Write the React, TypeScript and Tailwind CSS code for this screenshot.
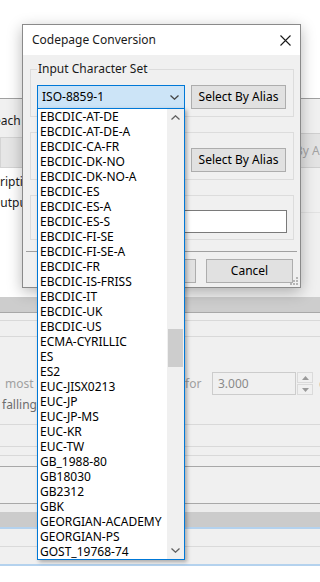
import React from "react";

const charsets = [
  "EBCDIC-AT-DE",
  "EBCDIC-AT-DE-A",
  "EBCDIC-CA-FR",
  "EBCDIC-DK-NO",
  "EBCDIC-DK-NO-A",
  "EBCDIC-ES",
  "EBCDIC-ES-A",
  "EBCDIC-ES-S",
  "EBCDIC-FI-SE",
  "EBCDIC-FI-SE-A",
  "EBCDIC-FR",
  "EBCDIC-IS-FRISS",
  "EBCDIC-IT",
  "EBCDIC-UK",
  "EBCDIC-US",
  "ECMA-CYRILLIC",
  "ES",
  "ES2",
  "EUC-JISX0213",
  "EUC-JP",
  "EUC-JP-MS",
  "EUC-KR",
  "EUC-TW",
  "GB_1988-80",
  "GB18030",
  "GB2312",
  "GBK",
  "GEORGIAN-ACADEMY",
  "GEORGIAN-PS",
  "GOST_19768-74",
];

function Chevron({ up = false, className = "" }: { up?: boolean; className?: string }) {
  return (
    <svg width="9" height="5" viewBox="0 0 9 5" className={className}>
      <path
        d={up ? "M0.5 4.5 L4.5 0.8 L8.5 4.5" : "M0.5 0.5 L4.5 4.2 L8.5 0.5"}
        fill="none"
        stroke="currentColor"
        strokeWidth="1.3"
      />
    </svg>
  );
}

function Background() {
  return (
    <div className="flex h-full flex-col">
      <div className="h-[98px] shrink-0 bg-white" />
      <div className="flex h-[34px] shrink-0 items-end border-t border-[#a0a0a0] bg-[#f0f0f0] pb-[3px]">
        <span className="-ml-[6px] whitespace-nowrap leading-[16px] text-[#1a1a1a]">each value</span>
      </div>
      <div className="flex h-[36px] shrink-0 items-stretch gap-[6px] bg-[#f0f0f0] pt-[1px]">
        <div className="mt-[4px] w-[245px] shrink-0 border border-[#d4d4d4] bg-[#e6e6e6]" />
        <div className="flex w-[95px] shrink-0 items-center justify-center whitespace-nowrap border border-[#cfcfcf] bg-[#e3e3e3] text-[#a3a3a3]">
          Select By Alias
        </div>
      </div>
      <div className="flex h-[129px] shrink-0">
        <div className="flex w-[170px] flex-col items-start bg-white pt-[6px]">
          <span className="-ml-[27px] whitespace-nowrap leading-[16px] text-[#1a1a1a]">Description</span>
          <span className="-ml-[9px] mt-[5px] whitespace-nowrap leading-[16px] text-[#1a1a1a]">Output</span>
        </div>
        <div className="flex-1 bg-[#f0f0f0]">
          <div className="mt-[44px] border-t border-[#e2e2e2]" />
        </div>
      </div>
      <div className="h-[15px] shrink-0 bg-[#cdcdcd]" />
      <div className="h-[8px] shrink-0 border-t border-[#a8a8a8] bg-[#f0f0f0]" />
      <div className="h-[16px] shrink-0 border-t border-[#d9d9d9] bg-[#f0f0f0]" />
      <div className="flex h-[88px] shrink-0 flex-col border-t border-[#d9d9d9] bg-[#f0f0f0]">
        <div className="mt-[35px] flex h-[23px] items-center">
          <span className="w-[180px] shrink-0 pl-[5px] text-[#a0a0a0]">most recent</span>
          <span className="w-[32px] shrink-0 pl-[5px] text-[#a0a0a0]">for</span>
          <div className="flex h-[23px] w-[84px] shrink-0 items-center border border-[#cccccc] bg-[#f0f0f0] pl-[5px] text-[#8a8a8a]">
            3.000
          </div>
          <div className="ml-[1px] flex h-[23px] w-[16px] shrink-0 flex-col gap-[1px]">
            <div className="flex flex-1 items-center justify-center border border-[#dadada] text-[#9a9a9a]">
              <svg width="7" height="4" viewBox="0 0 7 4"><path d="M0 4 L3.5 0 L7 4Z" fill="currentColor" /></svg>
            </div>
            <div className="flex flex-1 items-center justify-center border border-[#dadada] text-[#9a9a9a]">
              <svg width="7" height="4" viewBox="0 0 7 4"><path d="M0 0 L3.5 4 L7 0Z" fill="currentColor" /></svg>
            </div>
          </div>
          <span className="ml-[6px] text-[#a0a0a0]">c</span>
        </div>
        <span className="mt-[2px] pl-[2px] leading-[16px] text-[#6d6d6d]">falling</span>
      </div>
      <div className="h-[22px] shrink-0 border-t border-[#d9d9d9] bg-[#f0f0f0]" />
      <div className="h-[9px] shrink-0 border-t border-[#d9d9d9] bg-[#f0f0f0]" />
      <div className="h-[11px] shrink-0 border-t border-[#d9d9d9] bg-[#f0f0f0]" />
      <div className="h-[37px] shrink-0 border-t border-[#a8a8a8] bg-[#f0f0f0]" />
      <div className="h-[9px] shrink-0 border-t border-[#a8a8a8] bg-[#ececec]" />
      <div className="h-[15px] shrink-0 bg-[#cbcbcb]" />
      <div className="h-[19px] shrink-0 border-t-2 border-[#b4d2ee] bg-[#f0f0f0]" />
      <div className="h-[18px] shrink-0 border-t border-[#dadada] bg-[#f0f0f0]" />
      <div className="flex-1 border-t-2 border-[#b4d2ee] bg-white" />
    </div>
  );
}

function GroupBox({ label, children, className = "" }: { label: string; children: React.ReactNode; className?: string }) {
  return (
    <fieldset className={`ml-[7px] mr-[6px] border border-[#dcdcdc] px-[6px] ${className}`}>
      <legend className="px-[1px] leading-[16px] text-[#1a1a1a]">{label}</legend>
      {children}
    </fieldset>
  );
}

function Dialog() {
  return (
    <div className="absolute left-[22px] top-[24px] w-[279px] border border-[#8a8a8a] bg-[#f0f0f0] shadow-[0_4px_14px_rgba(0,0,0,0.28)]">
      <div className="flex h-[30px] items-center justify-between bg-white pl-[9px] pr-[9px]">
        <span className="text-[#1a1a1a]">Codepage Conversion</span>
        <svg width="11" height="11" viewBox="0 0 11 11" className="mt-[1px] text-[#1a1a1a]">
          <path d="M0.5 0.5 L10.5 10.5 M10.5 0.5 L0.5 10.5" stroke="currentColor" strokeWidth="1.1" />
        </svg>
      </div>

      <GroupBox label="Input Character Set" className="mt-[6px] pt-[8px] pb-[7px]">
        <div className="flex gap-[6px]">
          <div className="flex h-[24px] w-[148px] items-center justify-between border border-[#0078d7] bg-[#cce4f7] pl-[4px] pr-[5px]">
            <span>ISO-8859-1</span>
            <Chevron className="text-[#444]" />
          </div>
          <button className="h-[24px] w-[95px] border border-[#adadad] bg-[#e1e1e1] text-black">Select By Alias</button>
        </div>
      </GroupBox>

      <GroupBox label="Output Character Set" className="mt-[7px] pt-[8px] pb-[7px]">
        <div className="flex gap-[6px]">
          <div className="flex h-[24px] w-[148px] items-center justify-between border border-[#adadad] bg-[#e1e1e1] pl-[4px] pr-[5px]">
            <span>UTF-8</span>
            <Chevron className="text-[#444]" />
          </div>
          <button className="h-[24px] w-[95px] border border-[#adadad] bg-[#e1e1e1] text-black">Select By Alias</button>
        </div>
      </GroupBox>

      <GroupBox label="Output File" className="mt-[7px] pt-[7px] pb-[6px]">
        <div className="h-[23px] w-[250px] border border-[#7a7a7a] bg-white" />
      </GroupBox>

      <div className="mx-[3px] mt-[11px] border-t border-[#a0a0a0]" />

      <div className="relative flex justify-end gap-[10px] pb-[4px] pr-[7px] pt-[7px]">
        <button className="h-[24px] w-[87px] border border-[#adadad] bg-[#e1e1e1] text-black">OK</button>
        <button className="h-[24px] w-[87px] border border-[#adadad] bg-[#e1e1e1] text-black">Cancel</button>
        <svg width="8" height="8" viewBox="0 0 8 8" className="absolute bottom-[2px] right-[2px] text-[#b5b5b5]">
          <rect x="6" y="0" width="2" height="2" fill="currentColor" />
          <rect x="3" y="3" width="2" height="2" fill="currentColor" />
          <rect x="6" y="3" width="2" height="2" fill="currentColor" />
          <rect x="0" y="6" width="2" height="2" fill="currentColor" />
          <rect x="3" y="6" width="2" height="2" fill="currentColor" />
          <rect x="6" y="6" width="2" height="2" fill="currentColor" />
        </svg>
      </div>
    </div>
  );
}

function DropdownList() {
  return (
    <div className="absolute left-[37px] top-[108px] flex h-[452px] w-[148px] border border-[#0078d7] bg-white shadow-[2px_2px_4px_rgba(0,0,0,0.3)]">
      <ul className="flex-1 overflow-hidden">
        {charsets.map((name) => (
          <li key={name} className="h-[15px] whitespace-nowrap pl-[2px] leading-[15px] text-black">
            {name}
          </li>
        ))}
      </ul>
      <div className="flex w-[17px] shrink-0 flex-col bg-[#f0f0f0]">
        <div className="flex h-[17px] items-center justify-center text-[#606060]">
          <Chevron up />
        </div>
        <div className="flex-1 pt-[203px]">
          <div className="mx-auto h-[38px] w-[15px] bg-[#cdcdcd]" />
        </div>
        <div className="flex h-[17px] items-center justify-center text-[#606060]">
          <Chevron />
        </div>
      </div>
    </div>
  );
}

export default function App() {
  return (
    <div className="relative h-[582px] w-[320px] overflow-hidden bg-white font-['Noto_Sans',sans-serif] text-[12px] text-black">
      <Background />
      <Dialog />
      <DropdownList />
    </div>
  );
}
